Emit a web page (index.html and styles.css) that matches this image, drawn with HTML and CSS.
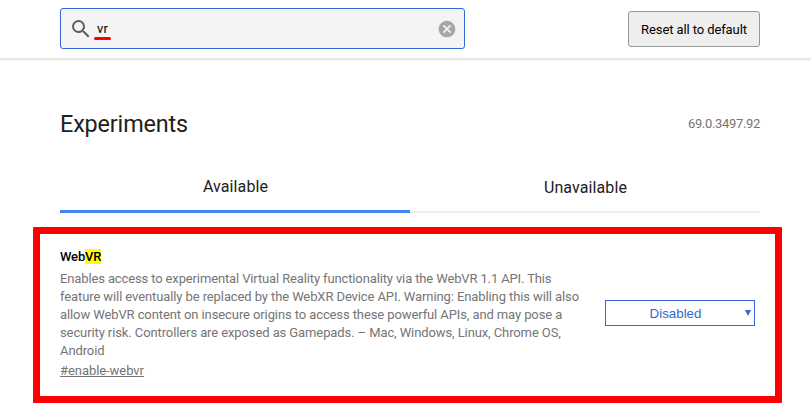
FILE: index.html
```html
<!DOCTYPE html>
<html lang="en">
<head>
<meta charset="utf-8">
<title>Experiments</title>
<link rel="stylesheet" href="styles.css">
</head>
<body>
<header class="topbar">
  <div class="search">
    <svg class="search-icon" viewBox="0 0 24 24"><path fill="#5a5e63" d="M15.5 14h-.79l-.28-.27A6.471 6.471 0 0 0 16 9.5 6.5 6.5 0 1 0 9.5 16c1.61 0 3.09-.59 4.23-1.57l.27.28v.79l5 4.99L20.49 19l-4.99-5zm-6 0C7.01 14 5 11.99 5 9.5S7.01 5 9.5 5 14 7.01 14 9.5 11.99 14 9.5 14z"/></svg>
    <span class="query">vr</span>
    <svg class="clear-icon" viewBox="0 0 24 24"><path fill="#a6a7a8" d="M12 2C6.47 2 2 6.47 2 12s4.47 10 10 10 10-4.47 10-10S17.53 2 12 2zm5 13.59L15.59 17 12 13.41 8.41 17 7 15.59 10.59 12 7 8.41 8.41 7 12 10.59 15.59 7 17 8.41 13.41 12 17 15.59z"/></svg>
  </div>
  <button class="reset">Reset all to default</button>
</header>
<main>
  <div class="heading">
    <h1>Experiments</h1>
    <span class="version">69.0.3497.92</span>
  </div>
  <nav class="tabs">
    <div class="tab active">Available</div>
    <div class="tab">Unavailable</div>
  </nav>
  <section class="flag">
    <div class="info">
      <h2>Web<mark>VR</mark></h2>
      <p>Enables access to experimental Virtual Reality functionality via the WebVR 1.1 API. This feature will eventually be replaced by the WebXR Device API. Warning: Enabling this will also allow WebVR content on insecure origins to access these powerful APIs, and may pose a security risk. Controllers are exposed as Gamepads. – Mac, Windows, Linux, Chrome OS, Android</p>
      <a class="permalink">#enable-webvr</a>
    </div>
    <div class="select">
      <span>Disabled</span>
      <svg class="arrow" viewBox="0 0 6 6"><path fill="#3367d6" d="M0 0h6L3 6z"/></svg>
    </div>
  </section>
</main>
</body>
</html>
```

FILE: styles.css
```css
* { box-sizing: border-box; }
body {
  margin: 0;
  height: 414px;
  overflow: hidden;
  background: #fff;
  color: #000;
  font: 13px/18px Roboto, "Liberation Sans", sans-serif;
}
.topbar {
  display: flex;
  justify-content: space-between;
  align-items: flex-start;
  height: 58px;
  padding: 8px 51px 0 60px;
  box-shadow: 0 2px 2px rgba(0, 0, 0, .12);
}
.search {
  display: flex;
  align-items: center;
  width: 405px;
  height: 41px;
  padding: 0 7px 0 8px;
  border: 1px solid #3367d6;
  border-radius: 3px;
  background: #f4f4f4;
}
.search-icon { width: 24px; height: 24px; }
.query {
  position: relative;
  margin-left: 4px;
  flex: 1;
  letter-spacing: .3px;
}
.query::after {
  content: "";
  position: absolute;
  left: -3px;
  top: 17px;
  width: 17px;
  height: 3px;
  border-radius: 1.5px;
  background: #f00;
}
.clear-icon { width: 20px; height: 20px; }
.reset {
  width: 132px;
  height: 36px;
  margin-top: 3px;
  padding: 1px 0 0;
  border: 1px solid #999;
  border-radius: 3px;
  background: #eee;
  color: #000;
  font: inherit;
  letter-spacing: -.1px;
}
main { padding: 0 29px 0 33px; }
.heading {
  display: flex;
  justify-content: space-between;
  height: 104px;
  padding: 51px 22px 0 27px;
}
h1 {
  margin: 0;
  color: #212121;
  font-size: 23.4px;
  font-weight: 400;
  line-height: 30px;
  letter-spacing: -.15px;
}
.version {
  margin-top: 6px;
  color: #757575;
  letter-spacing: -.33px;
}
.tabs {
  display: flex;
  height: 51px;
  margin: 0 22px 14px 27px;
}
.tab {
  flex: 1;
  padding: 16px 0 0 1px;
  border-bottom: 2px solid #eee;
  color: #212121;
  font-size: 16px;
  line-height: 20px;
  letter-spacing: .1px;
  text-align: center;
}
.tab.active {
  padding-top: 15px;
  border-bottom: 3px solid #4285f4;
}
.flag {
  display: flex;
  align-items: flex-start;
  justify-content: space-between;
  height: 176px;
  padding: 14px 20px 0;
  border: 7px solid #f00;
  border-radius: 1px;
}
.info {
  width: 525px;
  color: #757575;
}
h2 {
  margin: 0 0 4px;
  color: #000;
  font-size: 13px;
  font-weight: 500;
  line-height: 18px;
  letter-spacing: -.15px;
}
mark { background: #ff0; color: #000; }
p { margin: 0 0 2px; letter-spacing: -.1px; }
p::first-line { letter-spacing: -.13px; }
.permalink { display: table; letter-spacing: -.06px; text-decoration: underline; }
.select {
  display: flex;
  align-items: center;
  width: 150px;
  height: 26px;
  margin-top: 52px;
  padding: 0 3px 0 0;
  border: 1px solid #3367d6;
  color: #3367d6;
  font: 13.33px/24px "Liberation Sans", sans-serif;
}
.select span { flex: 1; padding: 1px 0 0; text-align: center; }
.arrow { width: 6px; height: 6px; }
```
